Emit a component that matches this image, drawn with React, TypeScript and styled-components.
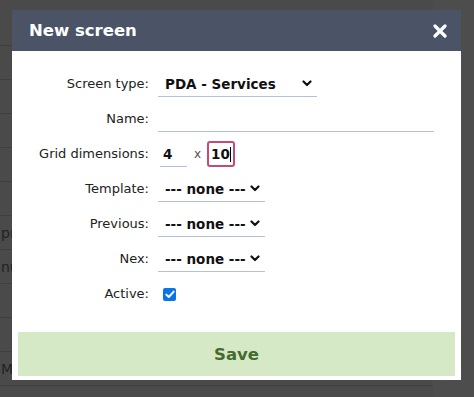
import styled, { createGlobalStyle } from 'styled-components';

const GlobalStyle = createGlobalStyle`
  html, body {
    margin: 0;
    padding: 0;
    background: #4a4a4a;
  }
  body {
    font-family: 'DejaVu Sans', 'Open Sans', sans-serif;
    width: 474px;
    height: 397px;
    overflow: hidden;
  }
`;

const backRows = ['', '', '', '', '', 'pří', 'nu', '', '', 'M', ''];

const App = () => {
  return (
    <>
      <GlobalStyle />
      <Page>
        <BackTable>
          <BackRow first>&nbsp;</BackRow>
          {backRows.map((text, i) => (
            <BackRow key={i}>
              <BackText>{text}</BackText>
            </BackRow>
          ))}
        </BackTable>
        <SideStrip />
        <Modal>
          <Header>
            <Title>New screen</Title>
            <CloseButton aria-label="Close">
              <svg width="14" height="14" viewBox="0 0 14 14">
                <path
                  d="M2 2 L12 12 M12 2 L2 12"
                  stroke="#fff"
                  strokeWidth="3.2"
                  strokeLinecap="round"
                />
              </svg>
            </CloseButton>
          </Header>
          <Body>
            <Form>
              <Label>Screen type:</Label>
              <SelectBox width={159}>
                <SelectValue>PDA - Services</SelectValue>
                <Chevron />
              </SelectBox>

              <Label>Name:</Label>
              <TextLine width={276} />

              <Label>Grid dimensions:</Label>
              <GridCell>
                <NumberBox>4</NumberBox>
                <Times>x</Times>
                <FocusBox>
                  10<Caret />
                </FocusBox>
              </GridCell>

              <Label>Template:</Label>
              <SelectBox width={107}>
                <SelectValue>--- none ---</SelectValue>
                <Chevron />
              </SelectBox>

              <Label>Previous:</Label>
              <SelectBox width={107}>
                <SelectValue>--- none ---</SelectValue>
                <Chevron />
              </SelectBox>

              <Label>Nex:</Label>
              <SelectBox width={107}>
                <SelectValue>--- none ---</SelectValue>
                <Chevron />
              </SelectBox>

              <Label>Active:</Label>
              <CheckCell>
                <CheckBox>
                  <svg width="10" height="9" viewBox="0 0 10 9">
                    <path
                      d="M1.3 4.6 L3.8 7 L8.7 1.6"
                      stroke="#fff"
                      strokeWidth="1.9"
                      fill="none"
                      strokeLinecap="round"
                      strokeLinejoin="round"
                    />
                  </svg>
                </CheckBox>
              </CheckCell>
            </Form>
            <SaveButton>Save</SaveButton>
          </Body>
        </Modal>
      </Page>
    </>
  );
};

export default App;

const Chevron = () => (
  <svg width="10" height="7" viewBox="0 0 10 7">
    <path
      d="M1.5 1.5 L5 5 L8.5 1.5"
      stroke="#111"
      strokeWidth="2.2"
      fill="none"
      strokeLinecap="round"
      strokeLinejoin="round"
    />
  </svg>
);

const Page = styled.div`
  position: relative;
  width: 474px;
  height: 397px;
  background: #4a4a4a;
  overflow: hidden;
`;

const BackTable = styled.div`
  display: flex;
  flex-direction: column;
  width: 433px;
`;

const BackRow = styled.div<{ first?: boolean }>`
  height: ${(p) => (p.first ? '46px' : '34px')};
  border-bottom: 1px solid #3f3f3f;
  display: flex;
  align-items: center;
  font-size: 14px;
  box-sizing: border-box;
`;

const BackText = styled.span`
  margin-left: 1px;
  color: #1f2326;
`;

const SideStrip = styled.div`
  position: absolute;
  top: 0;
  right: 0;
  width: 41px;
  height: 100%;
  background: #4d4d4d;
`;

const Modal = styled.div`
  position: absolute;
  left: 12px;
  top: 10px;
  width: 449px;
  height: 370px;
  background: #fff;
  display: flex;
  flex-direction: column;
`;

const Header = styled.div`
  height: 41px;
  background: #4a5466;
  display: flex;
  align-items: center;
  justify-content: space-between;
  padding: 0 14px 0 17px;
`;

const Title = styled.h2`
  margin: 0;
  color: #fff;
  font-size: 16.5px;
  font-weight: bold;
`;

const CloseButton = styled.button`
  border: none;
  background: none;
  padding: 0;
  display: flex;
  cursor: pointer;
`;

const Body = styled.div`
  flex: 1;
  display: flex;
  flex-direction: column;
  justify-content: space-between;
  padding: 20px 6px 4px 6px;
`;

const Form = styled.div`
  display: grid;
  grid-template-columns: 131px auto;
  column-gap: 9px;
  row-gap: 9px;
  align-items: center;
  justify-items: start;
`;

const Label = styled.label`
  justify-self: end;
  font-size: 13px;
  color: #222;
  line-height: 26px;
  white-space: nowrap;
`;

const SelectBox = styled.div<{ width: number }>`
  width: ${(p) => p.width}px;
  height: 26px;
  box-sizing: border-box;
  border-bottom: 1px solid #b3c1da;
  display: flex;
  align-items: center;
  justify-content: space-between;
  padding: 0 5px 0 7px;
`;

const SelectValue = styled.span`
  font-size: 13.5px;
  font-weight: bold;
  color: #111;
`;

const TextLine = styled.div<{ width: number }>`
  width: ${(p) => p.width}px;
  height: 26px;
  box-sizing: border-box;
  border-bottom: 1px solid #b3c1da;
`;

const GridCell = styled.div`
  display: flex;
  align-items: center;
  height: 26px;
`;

const NumberBox = styled.div`
  width: 27px;
  height: 26px;
  margin-left: 2px;
  box-sizing: border-box;
  border-bottom: 1px solid #b3c1da;
  font-size: 13.5px;
  font-weight: bold;
  color: #111;
  display: flex;
  align-items: center;
  padding-left: 3px;
`;

const Times = styled.span`
  font-size: 12px;
  color: #555;
  margin: 0 6px 0 7px;
`;

const FocusBox = styled.div`
  width: 28px;
  height: 26px;
  box-sizing: border-box;
  border: 2px solid #c44a78;
  border-radius: 3px;
  font-size: 13.5px;
  font-weight: bold;
  color: #111;
  display: flex;
  align-items: center;
  padding-left: 2px;
`;

const Caret = styled.span`
  display: inline-block;
  width: 1px;
  height: 15px;
  background: #000;
`;

const CheckCell = styled.div`
  height: 26px;
  display: flex;
  align-items: center;
  padding-left: 5px;
`;

const CheckBox = styled.span`
  width: 13px;
  height: 13px;
  border-radius: 2px;
  background: #0b75e8;
  display: flex;
  align-items: center;
  justify-content: center;
`;

const SaveButton = styled.button`
  height: 44px;
  border: none;
  background: #d6e9c6;
  color: #466b2e;
  font-family: 'DejaVu Sans', 'Open Sans', sans-serif;
  font-size: 16.5px;
  font-weight: bold;
  cursor: pointer;
`;
